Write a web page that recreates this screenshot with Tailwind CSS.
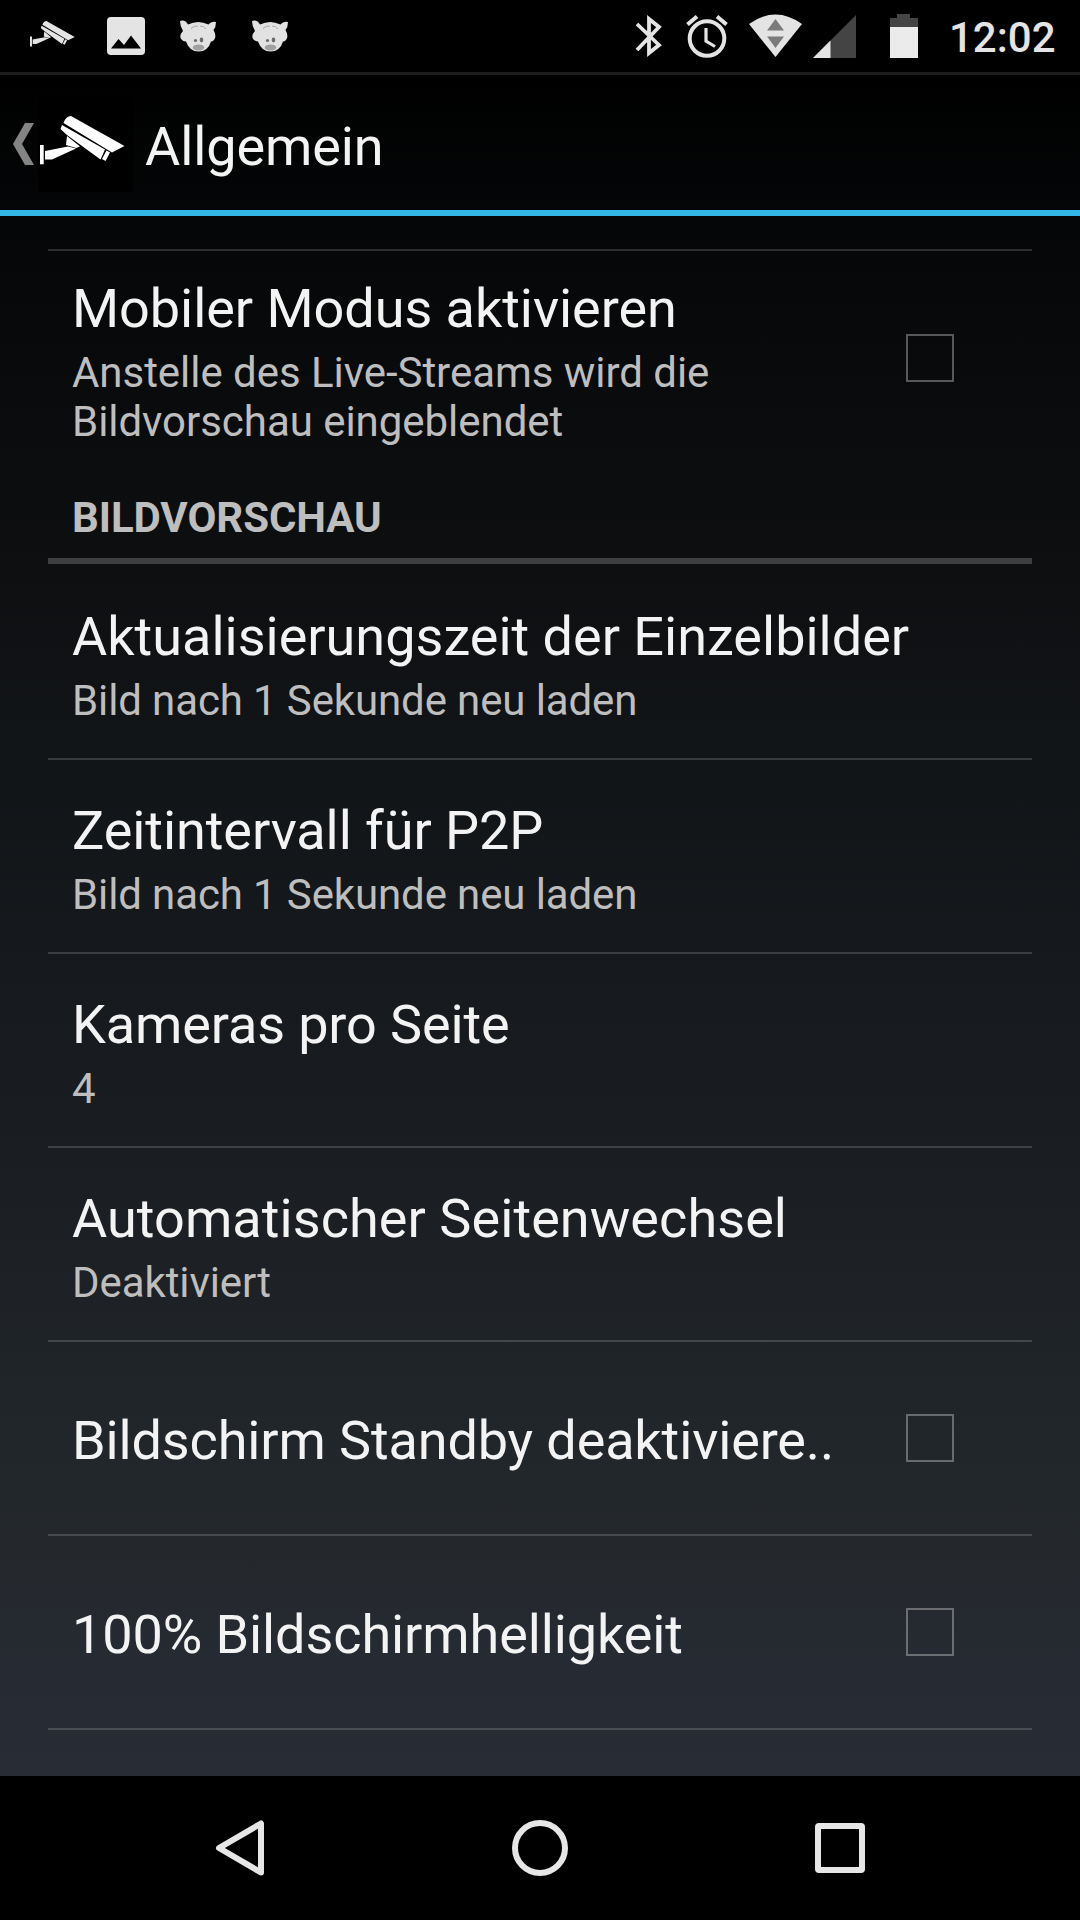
<!DOCTYPE html>
<html lang="de">
<head>
<meta charset="utf-8">
<title>Allgemein</title>
<script src="https://cdn.jsdelivr.net/npm/@tailwindcss/browser@4"></script>
</head>
<body class="w-[1080px] h-[1920px] overflow-hidden bg-black font-[Roboto,sans-serif] text-[#f3f3f3]">
<svg class="hidden">
  <symbol id="camera" viewBox="0 0 85 49">
    <path d="M0 29h3.700v19.300H0zM5 35l23-4.500 8 2L12 43.500H5zM27 20l13 10.500-4 1.500-10-3z"/>
    <path d="M23.500 7Q26 0 31 0l53.500 30L72 36.500zM22 9l43 24.500-4.500 10L27 19l-6.500-6zM66.500 34.500l3.500 2-4.500 8.500-3.500-2z"/>
  </symbol>
  <symbol id="pig" viewBox="0 0 36 32">
    <path fill="#e2e2e2" d="M0 1Q5-1 8 4.500Q18-.5 28.500 4.500Q31 1 36 2Q36 7 33.500 10Q37 16 34 20Q32.500 21.500 31 21.500Q28 31.500 18.500 31.500Q9.500 31.500 6 21.500Q3 21.500 1 19Q-1 15 3 11Q0 6 0 1z"/>
    <path d="M11 8.500q3-3 7-2.500M20 6q4 0 6 3" stroke="#aaa" fill="none"/>
    <circle cx="15.500" cy="20.500" r="1.600" fill="#6d6d6d"/><ellipse cx="21.500" cy="20" rx="1.800" ry="2.400" fill="#6d6d6d"/>
    <ellipse cx="18.500" cy="27.500" rx="5.700" ry="3.100" fill="#a0a0a0"/>
  </symbol>
</svg>
<div class="flex flex-col h-full">
  <header class="h-[72px] shrink-0 flex items-center">
    <svg class="w-[45px] h-[26px] ml-[30px] mb-1" fill="#e4e4e4"><use href="#camera"/></svg>
    <svg class="w-[38px] h-[38px] ml-8" viewBox="0 0 38 38"><rect width="38" height="38" rx="4" fill="#e4e4e4"/><path d="M4 31.500L11.500 22l5.500 6 7-9.500 10 13z"/></svg>
    <svg class="w-9 h-8 ml-[35px]"><use href="#pig"/></svg>
    <svg class="w-9 h-8 ml-9"><use href="#pig"/></svg>
    <svg class="w-[27px] h-11 ml-[347px]" viewBox="0 0 27 44" fill="none" stroke="#e4e4e4" stroke-width="3.800"><path d="M2 10l22 21-10 8V5l10 8L2 36"/></svg>
    <svg class="w-[42px] h-11 ml-6" viewBox="0 0 42 44" fill="none" stroke="#e4e4e4" stroke-width="4"><circle cx="21" cy="24.500" r="17.300"/><path d="M1.500 10.500l9.500-8M40.500 10.500l-9.500-8"/><path d="M20 14v13l9 5.500" stroke-width="3.200"/></svg>
    <svg class="w-[53px] h-[43px] ml-[21px] mb-px" viewBox="0 0 53 43"><path d="M0 10Q26.500-9 53 10L26.500 43z" fill="#e4e4e4"/><path d="M18 16.500h17L26.500 5zM18 22.500h17L26.500 34z" fill="#7b7b7b"/></svg>
    <svg class="w-[43px] h-[43px] ml-[11px]" viewBox="0 0 43 43"><path d="M43 0v43H0z" fill="#444"/><path d="M17.500 25.500V43H0z" fill="#e4e4e4"/></svg>
    <svg class="w-7 h-11 ml-[34px]" viewBox="0 0 28 44"><path d="M0 4h7V0h13v4h8v14H0z" fill="#444"/><path d="M0 13h28v31H0z" fill="#ebebeb"/></svg>
    <span class="ml-[31px] mt-[2px] text-[42px] leading-[49px] font-medium text-[#e4e4e4]">12:02</span>
  </header>
  <main class="h-[1704px] shrink-0 bg-[linear-gradient(#000_0%,#050708_10%,#0e0f11_29%,#121518_41%,#1c1f23_68%,#202529_77%,#24282c_87%,#262a32_93%,#282c35_100%)]">
    <div class="h-[144px] border-t-[3px] border-[#1d1d1d] border-b-[6px] border-b-[#33b5e5] pt-[3px] flex items-center">
      <svg class="w-[21px] h-[42px] ml-[13px]" viewBox="0 0 21 42"><path d="M12 0h9L9 21l12 21h-9L0 21z" fill="#848484"/></svg>
      <div class="size-[95px] ml-1 bg-black pt-[19px] pl-[2px]"><svg class="w-[85px] h-[49px]" fill="#fff"><use href="#camera"/></svg></div>
      <h1 class="ml-3 mt-1 text-[54px] leading-[63px] tracking-[-0.1px]">Allgemein</h1>
    </div>
    <div class="mx-12 mt-[33px] text-[54px] leading-[63px]">
      <div class="h-[216px] border-t-2 border-white/16 pl-6 pr-[78px] flex items-center justify-between">
        <div class="pt-[7px]"><div class="tracking-[-0.05px]">Mobiler Modus aktivieren</div><div class="mt-2 text-[42px] leading-[49px] tracking-[-0.04px] text-[#bebebe]">Anstelle des Live-Streams wird die<br>Bildvorschau eingeblendet</div></div>
        <div class="size-12 border-2 border-white/32"></div>
      </div>
      <h2 class="h-[99px] border-b-[6px] border-white/20 pl-6 pt-[28px] text-[42px] leading-[49px] font-bold tracking-[-0.08px] text-[#bebebe]">BILDVORSCHAU</h2>
      <div class="h-[196px] border-b-2 border-white/16 pl-6 pt-[41px]"><div>Aktualisierungszeit der Einzelbilder</div><div class="mt-2 text-[42px] leading-[49px] tracking-[-0.12px] text-[#bebebe]">Bild nach 1 Sekunde neu laden</div></div>
      <div class="h-[194px] border-b-2 border-white/16 pl-6 pt-[39px]"><div class="tracking-[-0.07px]">Zeitintervall für P2P</div><div class="mt-2 text-[42px] leading-[49px] tracking-[-0.12px] text-[#bebebe]">Bild nach 1 Sekunde neu laden</div></div>
      <div class="h-[194px] border-b-2 border-white/16 pl-6 pt-[39px]"><div class="tracking-[-0.12px]">Kameras pro Seite</div><div class="mt-2 text-[42px] leading-[49px] text-[#bebebe]">4</div></div>
      <div class="h-[194px] border-b-2 border-white/16 pl-6 pt-[39px]"><div class="tracking-[0.07px]">Automatischer Seitenwechsel</div><div class="mt-2 text-[42px] leading-[49px] tracking-[-0.08px] text-[#bebebe]">Deaktiviert</div></div>
      <div class="h-[194px] border-b-2 border-white/16 pl-6 pr-[78px] flex items-center justify-between"><div class="pt-[5px] tracking-[-0.13px]">Bildschirm Standby deaktiviere..</div><div class="size-12 border-2 border-white/32"></div></div>
      <div class="h-[194px] border-b-2 border-white/16 pl-6 pr-[78px] flex items-center justify-between"><div class="pt-[5px] tracking-[-0.1px]">100% Bildschirmhelligkeit</div><div class="size-12 border-2 border-white/32"></div></div>
    </div>
  </main>
  <nav class="h-36 shrink-0 flex items-center pl-[215px]">
    <svg class="w-[50px] h-14" viewBox="0 0 50 56" fill="none" stroke="#e6e6e6" stroke-width="6" stroke-linejoin="round"><path d="M46 3.500v49L4 28z"/></svg>
    <svg class="w-14 h-14 ml-[247px]" fill="none" stroke="#e6e6e6" stroke-width="6"><circle cx="28" cy="28" r="25"/></svg>
    <svg class="w-[50px] h-[50px] ml-[247px]" fill="none" stroke="#e6e6e6" stroke-width="6"><rect x="3" y="3" width="44" height="44" rx="1"/></svg>
  </nav>
</div>
</body>
</html>
